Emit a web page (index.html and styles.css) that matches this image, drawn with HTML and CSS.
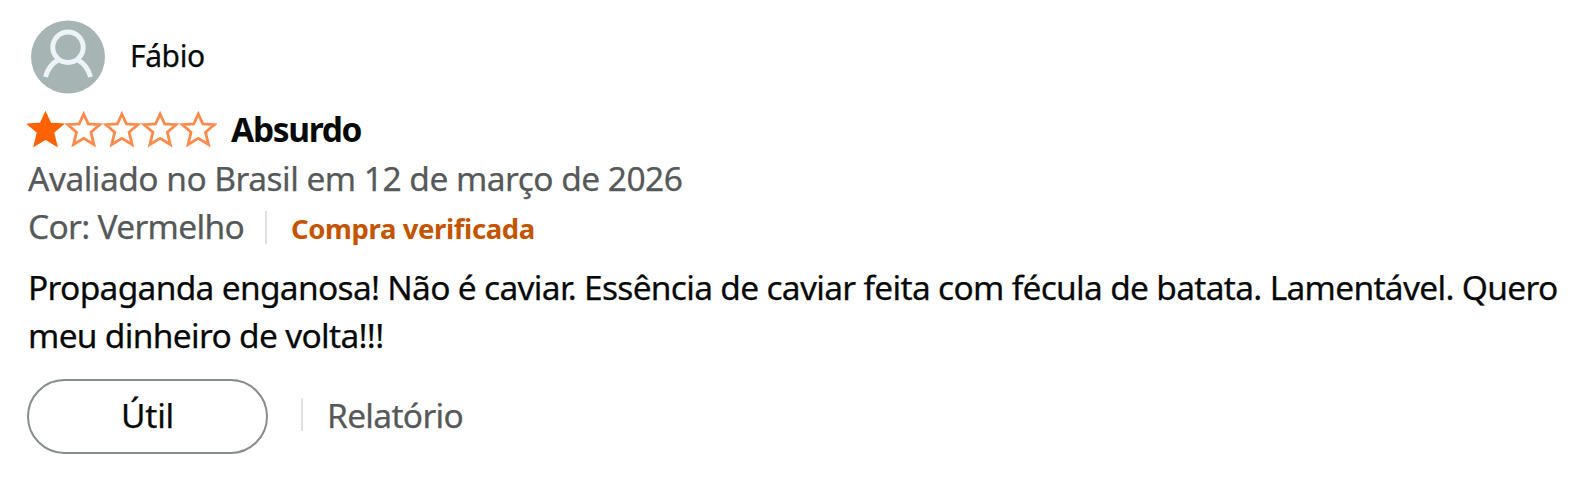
FILE: index.html
```html
<!DOCTYPE html>
<html lang="pt-BR">
<head>
<meta charset="utf-8">
<title>Avaliação</title>
<link rel="stylesheet" href="styles.css">
</head>
<body>
<article class="review">
  <header class="profile">
    <svg class="avatar" viewBox="0 0 74 74">
      <ellipse cx="37" cy="37" rx="37" ry="36.5" fill="#a6b4b3"/>
      <circle cx="37" cy="27.3" r="15.200" fill="none" stroke="#edf3f8" stroke-width="5"/>
      <path d="M14.500 57Q17.500 45 28 39.500M59.500 57Q56.500 45 46 39.500" fill="none" stroke="#edf3f8" stroke-width="5"/>
    </svg>
    <span class="name">Fábio</span>
  </header>
  <div class="headline">
    <svg class="stars" viewBox="0 0 190 38">
      <defs><path id="star" d="M18.500 4L23 13.800L34.500 14.700L25.700 22.200L28.700 34.500L18.500 28.300L8.300 34.500L11.300 22.200L2.500 14.700L14 13.800Z"/></defs>
      <g fill="none" stroke="#ff8a4c" stroke-width="2.800">
        <use href="#star" class="full"/>
        <use href="#star" x="38.200"/>
        <use href="#star" x="76.400"/>
        <use href="#star" x="114.600"/>
        <use href="#star" x="152.800"/>
      </g>
    </svg>
    <strong class="title">Absurdo</strong>
  </div>
  <p class="meta origin">Avaliado no Brasil em 12 de março de 2026</p>
  <div class="meta details">
    <span class="variant">Cor: Vermelho</span>
    <i class="divider"></i>
    <strong class="verified">Compra verificada</strong>
  </div>
  <p class="body">Propaganda enganosa! Não é caviar. Essência de caviar feita com fécula de batata. Lamentável. Quero<br>meu dinheiro de volta!!!</p>
  <footer class="actions">
    <button class="helpful">Útil</button>
    <i class="divider"></i>
    <a class="report">Relatório</a>
  </footer>
</article>
</body>
</html>
```
FILE: styles.css
```css
* { box-sizing: border-box; }
body {
  margin: 0;
  background: #fff;
  color: #080a0a;
  font: 400 33.500px/48px "Noto Sans", "Open Sans", sans-serif;
  letter-spacing: -0.69px;
  -webkit-text-stroke: 0.25px currentColor;
}
.review { padding: 20px 0 0 27px; white-space: nowrap; }
.profile { display: flex; align-items: center; height: 74px; padding-left: 4px; }
.avatar { width: 74px; height: 74px; }
.name { margin: -2px 0 0 25px; font-size: 30px; letter-spacing: -0.4px; }
.headline { display: flex; height: 48px; margin-top: 11px; }
.stars { width: 190px; height: 38px; margin-top: 5px; }
.full { fill: #ff6200; stroke: #ff6200; }
.title { margin-left: 14px; font-weight: 700; letter-spacing: -1.3px; -webkit-text-stroke: 0; }
.meta { margin: 0; color: #565959; padding-left: 1px; }
.origin { margin-top: 1px; letter-spacing: -0.52px; }
.details { display: flex; align-items: center; height: 48px; }
.variant { width: 215px; }
.divider { width: 2px; height: 33px; background: #e0e0e0; }
.details .divider { margin: 2px 24px 0 22px; }
.verified {
  margin-top: 5px;
  color: #c45500;
  font-size: 27.500px;
  font-weight: 700;
  letter-spacing: -0.38px;
  -webkit-text-stroke: 0;
}
.body { margin: 13px 0 0 1px; }
.actions { display: flex; align-items: center; margin-top: 20px; }
.helpful {
  width: 241px;
  height: 75px;
  padding: 0 0 4px;
  border: 2px solid #888c8c;
  border-radius: 38px;
  background: #fff;
  color: inherit;
  font: inherit;
  letter-spacing: -0.2px;
}
.actions .divider { margin: -5px 24px 0 33px; }
.report { margin-top: -4px; color: #565959; }
```
